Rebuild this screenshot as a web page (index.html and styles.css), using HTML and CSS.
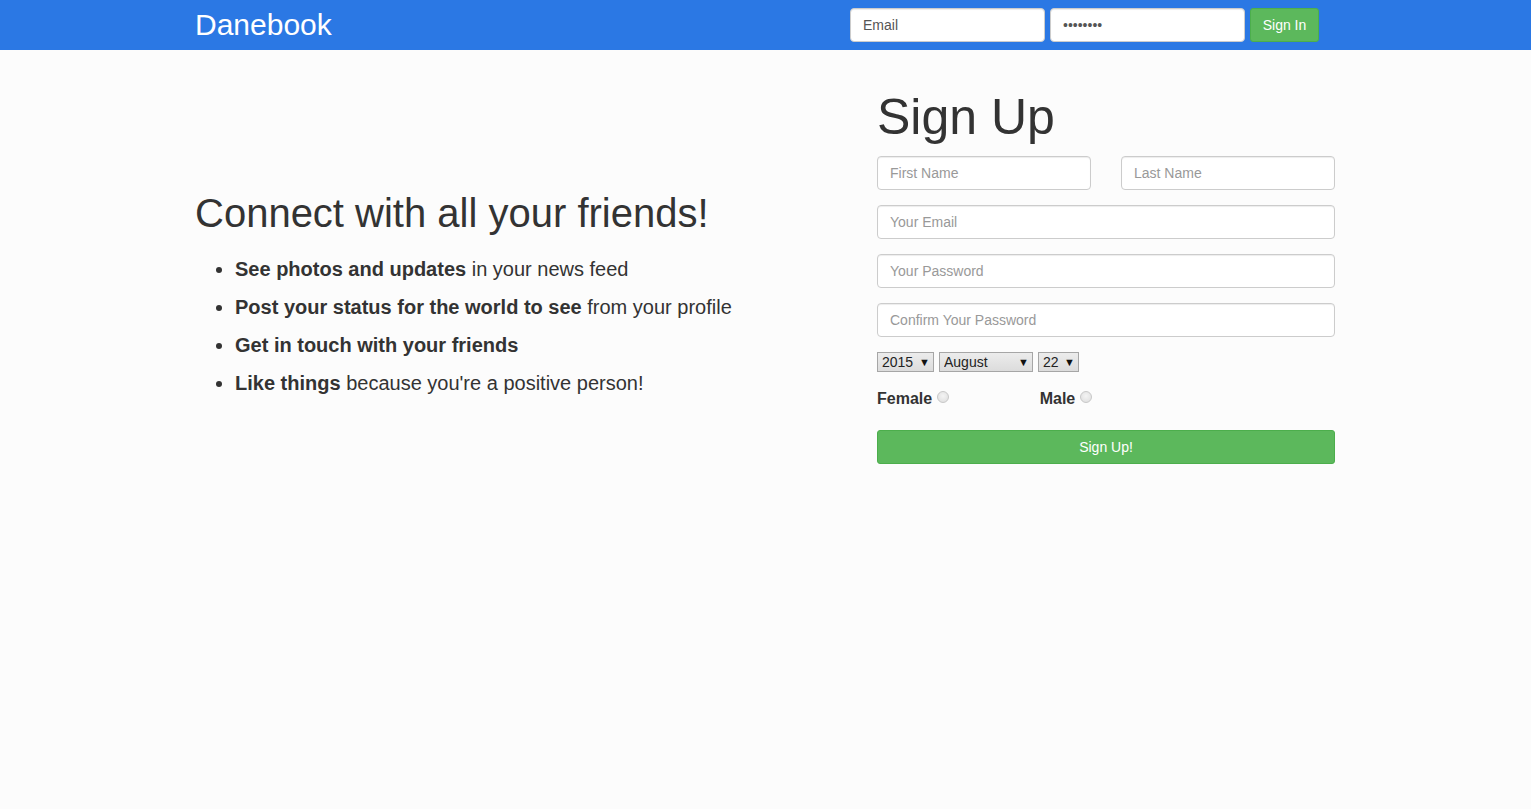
FILE: index.html
```html
<!DOCTYPE html>
<html lang="en">
<head>
<meta charset="utf-8">
<title>Danebook</title>
<link rel="stylesheet" href="styles.css">
</head>
<body>
<nav class="navbar">
  <div class="container nav-inner">
    <a class="brand" href="#">Danebook</a>
    <form class="nav-form">
      <input class="nav-input" type="text" value="Email">
      <input class="nav-input" type="password" value="password">
      <button class="btn btn-green nav-btn" type="button">Sign In</button>
    </form>
  </div>
</nav>
<main class="container main-grid">
  <section class="intro">
    <h2 class="intro-title">Connect with all your friends!</h2>
    <ul class="features">
      <li><strong>See photos and updates</strong> in your news feed</li>
      <li><strong>Post your status for the world to see</strong> from your profile</li>
      <li><strong>Get in touch with your friends</strong></li>
      <li><strong>Like things</strong> because you're a positive person!</li>
    </ul>
  </section>
  <section class="signup">
    <h1 class="signup-title">Sign Up</h1>
    <form class="signup-form">
      <div class="name-row">
        <input class="field" type="text" placeholder="First Name">
        <input class="field" type="text" placeholder="Last Name">
      </div>
      <input class="field" type="email" placeholder="Your Email">
      <input class="field" type="password" placeholder="Your Password">
      <input class="field" type="password" placeholder="Confirm Your Password">
      <div class="date-row">
        <span class="sel-wrap"><select class="sel sel-year"><option>2015</option></select></span>
        <span class="sel-wrap"><select class="sel sel-month"><option>August</option></select></span>
        <span class="sel-wrap"><select class="sel sel-day"><option>22</option></select></span>
      </div>
      <div class="gender-row">
        <label class="gender">Female <input class="radio" type="radio" name="g"></label>
        <label class="gender">Male <input class="radio" type="radio" name="g"></label>
      </div>
      <button class="btn btn-green btn-block" type="button">Sign Up!</button>
    </form>
  </section>
</main>
</body>
</html>
```
FILE: styles.css
```css
* { box-sizing: border-box; }
html, body { margin: 0; padding: 0; }
body {
  background: #fcfcfc;
  font-family: "Liberation Sans", Arial, sans-serif;
  font-size: 14px;
  line-height: 1.42857;
  color: #333;
}
.container {
  width: 1171px;
  margin: 0 auto;
  padding: 0 16px 0 15px;
}
.navbar {
  background: #2b78e4;
  height: 50px;
}
.nav-inner {
  display: flex;
  align-items: center;
  justify-content: space-between;
  height: 50px;
}
.brand {
  color: #fff;
  text-decoration: none;
  font-size: 30px;
  line-height: 50px;
}
.nav-form {
  display: flex;
  gap: 5px;
  margin-right: 16px;
  height: 34px;
}
.nav-input {
  width: 195px;
  height: 34px;
  padding: 6px 12px;
  border: 1px solid #ccc;
  border-radius: 4px;
  background: #fff;
  font-family: inherit;
  font-size: 14px;
  color: #555;
  box-shadow: inset 0 1px 1px rgba(0,0,0,.075);
}
.btn {
  font-family: inherit;
  font-size: 14px;
  line-height: 20px;
  padding: 6px 12px;
  border-radius: 3px;
  cursor: pointer;
}
.btn-green {
  background: #5cb85c;
  border: 1px solid #4cae4c;
  color: #fff;
}
.nav-btn {
  width: 69px;
  height: 34px;
  padding: 6px 0;
}
.main-grid {
  display: grid;
  grid-template-columns: 1fr 458px;
  column-gap: 30px;
  padding-top: 40px;
}
.intro { padding-top: 101px; }
.intro-title {
  margin: 0 0 20px;
  font-size: 40px;
  font-weight: 500;
  line-height: 44px;
}
.features {
  margin: 0;
  padding-left: 40px;
  font-size: 20px;
  line-height: 28px;
}
.features li { margin-bottom: 10px; }
.features strong { font-weight: 700; }
.signup-title {
  margin: 0 0 11px;
  font-size: 50px;
  font-weight: 500;
  line-height: 55px;
}
.signup-form {
  display: flex;
  flex-direction: column;
  gap: 15px;
}
.name-row {
  display: grid;
  grid-template-columns: 1fr 1fr;
  column-gap: 30px;
}
.field {
  width: 100%;
  height: 34px;
  padding: 6px 12px;
  border: 1px solid #ccc;
  border-radius: 4px;
  background: #fff;
  font-family: inherit;
  font-size: 14px;
  color: #555;
  box-shadow: inset 0 1px 1px rgba(0,0,0,.075);
}
.field::placeholder { color: #999; }
.date-row {
  display: flex;
  gap: 5px;
  height: 20px;
}
.sel-wrap {
  position: relative;
  display: flex;
  height: 20px;
}
.sel-wrap::after {
  content: "\25BC";
  position: absolute;
  right: 4px;
  top: 4px;
  font-size: 11px;
  line-height: 12px;
  color: #111;
  pointer-events: none;
}
.sel {
  -webkit-appearance: none;
  appearance: none;
  height: 20px;
  margin: 0;
  padding: 0 14px 0 4px;
  border: 1px solid #a6a6a6;
  border-radius: 0;
  background: linear-gradient(#ececec, #dcdcdc);
  font-family: inherit;
  font-size: 14px;
  line-height: 18px;
  color: #222;
}
.sel-year { width: 57px; }
.sel-month { width: 94px; }
.sel-day { width: 41px; }
.gender-row {
  display: grid;
  grid-template-columns: repeat(3, 1fr);
  column-gap: 30px;
  margin-bottom: 5px;
}
.gender {
  display: flex;
  align-items: center;
  gap: 5px;
  font-size: 16px;
  font-weight: 700;
  line-height: 23px;
}
.radio {
  -webkit-appearance: none;
  appearance: none;
  width: 12px;
  height: 12px;
  margin: 0;
  border: 1px solid #c8c8c8;
  border-radius: 50%;
  background: radial-gradient(circle at 50% 40%, #f4f4f4, #dcdcdc);
  position: relative;
  top: -2px;
}
.btn-block {
  width: 100%;
  height: 34px;
  text-align: center;
}
```
